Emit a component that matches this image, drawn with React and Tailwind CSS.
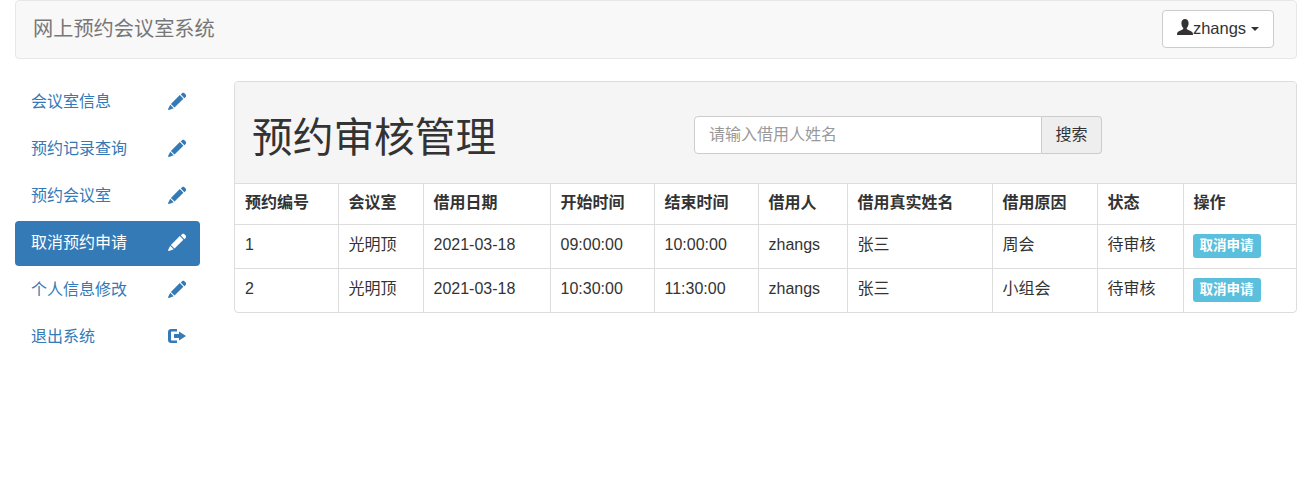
const FONT = "font-['Liberation_Sans','Noto_Sans_CJK_SC',sans-serif]";

const PENCIL = 'M14.3 1.1c.6-.4 1.5-.4 2.1.2l1.3 1.3c.6.6.7 1.5.2 2.1l-1.5 1.5-3.6-3.6 1.5-1.5zM11.8 3.1l3.6 3.6-8.9 8.9-3.6-3.6 8.9-8.9zM2.2 12.8l3.5 3.5-4.7 1.6c-.5.1-1-.3-.9-.9l2.1-4.2z';

const NAV_ITEMS = [
  { label: '会议室信息', icon: 'pencil' },
  { label: '预约记录查询', icon: 'pencil' },
  { label: '预约会议室', icon: 'pencil' },
  { label: '取消预约申请', icon: 'pencil', active: true },
  { label: '个人信息修改', icon: 'pencil' },
  { label: '退出系统', icon: 'logout' },
];

const COLUMNS = [
  { label: '预约编号', width: 'w-[103px]' },
  { label: '会议室', width: 'w-[85px]' },
  { label: '借用日期', width: 'w-[127px]' },
  { label: '开始时间', width: 'w-[104px]' },
  { label: '结束时间', width: 'w-[104px]' },
  { label: '借用人', width: 'w-[89px]' },
  { label: '借用真实姓名', width: 'w-[145px]' },
  { label: '借用原因', width: 'w-[105px]' },
  { label: '状态', width: 'w-[86px]' },
  { label: '操作', width: 'w-[114px]' },
];

const ROWS = [
  ['1', '光明顶', '2021-03-18', '09:00:00', '10:00:00', 'zhangs', '张三', '周会', '待审核'],
  ['2', '光明顶', '2021-03-18', '10:30:00', '11:30:00', 'zhangs', '张三', '小组会', '待审核'],
];

function PencilIcon() {
  return (
    <svg width="18" height="18" viewBox="0 0 18 18" fill="currentColor">
      <path d={PENCIL} />
    </svg>
  );
}

function LogoutIcon() {
  return (
    <svg width="18" height="18" viewBox="0 0 18 18" fill="currentColor">
      <path d="M3 2h6v2.500H4c-.6 0-1 .4-1 1v7c0 .6.4 1 1 1h5V16H3c-1.700 0-3-1.300-3-3V5c0-1.700 1.300-3 3-3z" />
      <path d="M11 4.500 18 9l-7 4.500V11H6V7h5V4.500z" />
    </svg>
  );
}

function UserIcon() {
  return (
    <svg width="16" height="16" viewBox="0 0 16 15" preserveAspectRatio="none" fill="currentColor" className="-mt-[3px]">
      <path d="M8 0c2.200 0 3.600 1.700 3.600 4 0 1.700-.7 3.300-1.700 4.200-.3.300-.3 1 .1 1.300 1.300.9 5.200 2 5.700 3.300.2.600.3 1.200.3 2.200H0c0-1 .1-1.600.3-2.200.5-1.300 4.400-2.400 5.700-3.300.4-.3.4-1 .1-1.300C5.100 7.300 4.400 5.700 4.400 4 4.400 1.700 5.800 0 8 0z" />
    </svg>
  );
}

export default function App() {
  return (
    <div className={`${FONT} min-h-[480px] bg-white text-base text-[#333] pl-[15px] pr-1`}>
      {/* Navbar */}
      <nav className="h-[59px] flex items-center justify-between bg-[#f8f8f8] border border-[#e7e7e7] rounded pl-[17px] pr-[22px]">
        <span className="text-[20.2px] text-[#777]">网上预约会议室系统</span>
        <button className="h-[38px] w-[112px] -mt-[2px] flex items-center justify-center bg-white border border-[#ccc] rounded">
          <UserIcon />
          <span className="text-[16.5px]">zhangs</span>
          <span className="ml-[5px] border-x-4 border-t-4 border-x-transparent border-t-[#333]" />
        </button>
      </nav>

      <div className="flex mt-[22px]">
        {/* Sidebar */}
        <ul className="w-[185px] shrink-0 flex flex-col gap-[2px] -mt-[1px]">
          {NAV_ITEMS.map((item) => (
            <li
              key={item.label}
              className={`h-[45px] flex items-center justify-between pl-[16px] pr-[14px] rounded ${item.active ? 'bg-[#337ab7] text-white' : 'text-[#337ab7]'}`}
            >
              <span className="-mt-[2px]">{item.label}</span>
              <span className="-mt-[4px]">{item.icon === 'logout' ? <LogoutIcon /> : <PencilIcon />}</span>
            </li>
          ))}
        </ul>

        {/* Main panel */}
        <div className="ml-[34px] w-[1063px] border border-[#ddd] rounded overflow-hidden self-start">
          <div className="h-[101px] bg-[#f5f5f5] flex items-center pl-[17px]">
            <h1 className="w-[442px] text-[40.7px] leading-[46px] font-normal mt-[10px]">预约审核管理</h1>
            <div className="flex h-[38px] w-[408px] mt-[4px]">
              <input
                placeholder="请输入借用人姓名"
                className="w-[348px] bg-white border border-[#ccc] rounded-l px-[14px] text-base outline-none placeholder:text-[#999]"
              />
              <button className="flex-1 bg-[#eee] border border-l-0 border-[#ccc] rounded-r text-[#333]">搜索</button>
            </div>
          </div>

          <table className="w-full table-fixed border-collapse">
            <thead>
              <tr className="h-[41px]">
                {COLUMNS.map((col, i) => (
                  <th
                    key={col.label}
                    className={`${col.width} border-t border-[#ddd] text-left font-bold pl-[10px] pb-[2px] ${i > 0 ? 'border-l' : ''}`}
                  >
                    {col.label}
                  </th>
                ))}
              </tr>
            </thead>
            <tbody>
              {ROWS.map((row, r) => {
                const last = r === ROWS.length - 1;
                return (
                  <tr key={row[0]} className={last ? 'h-[43px]' : 'h-[44px]'}>
                    {row.map((cell, i) => (
                      <td
                        key={i}
                        className={`border-t border-[#ddd] pl-[10px] ${last ? 'pb-[2px]' : 'pb-[4px]'} ${i > 0 ? 'border-l' : ''}`}
                      >
                        {cell}
                      </td>
                    ))}
                    <td className={`border-t border-l border-[#ddd] pl-[9px] ${last ? 'pb-0' : 'pb-[2px]'}`}>
                      <span className="block h-[24px] w-[68px] rounded-[3px] bg-[#5bc0de] text-white text-[13.5px] font-bold text-center leading-[24px]">
                        取消申请
                      </span>
                    </td>
                  </tr>
                );
              })}
            </tbody>
          </table>
        </div>
      </div>
    </div>
  );
}
